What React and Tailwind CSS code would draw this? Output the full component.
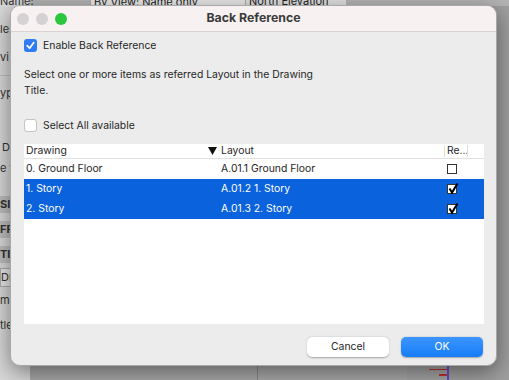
import React from "react";

const rows = [
  { drawing: "0. Ground Floor", layout: "A.01.1 Ground Floor", checked: false, selected: false },
  { drawing: "1. Story", layout: "A.01.2 1. Story", checked: true, selected: true },
  { drawing: "2. Story", layout: "A.01.3 2. Story", checked: true, selected: true },
];

const SmallBox = ({ checked }) => (
  <div className="relative w-[10px] h-[10px] border border-[#333] bg-white">
    {checked && (
      <svg width="11" height="11" viewBox="0 0 11 11" className="absolute -left-[0.5px] -top-[2px] overflow-visible">
        <path d="M1.5 5.5 L4 9.5 L9.5 0.5" stroke="#000" strokeWidth="2" fill="none" />
      </svg>
    )}
  </div>
);

const BlueCheck = () => (
  <div className="w-[13px] h-[13px] rounded-[3px] bg-[#2f7cf6] flex items-center justify-center">
    <svg width="9" height="9" viewBox="0 0 9 9">
      <path d="M1.2 4.6 L3.6 7.2 L7.8 1.6" stroke="#fff" strokeWidth="1.7" fill="none" strokeLinecap="round" strokeLinejoin="round" />
    </svg>
  </div>
);

export default function App() {
  return (
    <div
      className="relative w-[509px] h-[380px] overflow-hidden bg-[#b4b4b4] text-[#222]"
      style={{ fontFamily: "Inter, 'Noto Sans', sans-serif" }}
    >
      {/* background app behind the dialog */}
      <div className="absolute inset-0 flex">
        <div className="w-[30px] bg-[#d8d8d8] text-[11px] text-[#333] leading-none">
          <div className="h-[6px] -mt-[4px]">Name:</div>
          <div className="mt-[22px]">le:</div>
          <div className="mt-[17px]">vi</div>
          <div className="mt-[12px] border-t border-[#bdbdbd]"></div>
          <div className="mt-[12px]">yp</div>
          <div className="mt-[43px] pl-[2px]">D</div>
          <div className="mt-[10px]">e t</div>
          <div className="mt-[22px] bg-[#bdbdbd] py-[3px] font-bold">SI</div>
          <div className="mt-[8px] bg-[#bdbdbd] py-[3px] font-bold">FR</div>
          <div className="mt-[8px] bg-[#bdbdbd] py-[3px] font-bold">TI</div>
          <div className="mt-[5px] bg-[#e6e6e6] py-[3px] border border-[#aaa]">Dra</div>
          <div className="mt-[8px]">m</div>
          <div className="mt-[14px]">tle</div>
        </div>
        <div className="flex-1 flex flex-col">
          <div className="h-[6px] flex text-[11px] leading-none">
            <div className="w-[60px]"></div>
            <div className="w-[156px] bg-[#e8e8e8] -mt-[4px] pl-[3px] border border-[#aaa]">By View: Name only</div>
            <div className="-mt-[4px] pl-[3px] bg-[#e0e0e0] w-[100px]">North Elevation</div>
          </div>
          <div className="flex-1 flex">
            <div className="w-[227px] bg-[#a9a9a9]"></div>
            <div className="w-[1px] bg-[#888]"></div>
            <div className="flex-1 bg-[#a9a9a9]"></div>
            <div className="w-[40px] bg-[#a4a4a4] flex flex-col justify-end pb-[4px] gap-[4px] items-end">
              <div className="w-[18px] h-[1px] bg-[#c03030]"></div>
              <div className="w-[8px] h-[2px] bg-[#c03030]"></div>
            </div>
            <div className="w-[2px] bg-[#6a4bd0]"></div>
            <div className="w-[60px] bg-[#9f9f9f]"></div>
          </div>
        </div>
      </div>

      {/* dialog window */}
      <div className="absolute left-[10px] top-[5px] w-[487px] h-[361px] rounded-[10px] bg-[#ececec] shadow-[0_6px_22px_rgba(0,0,0,0.45)] border border-[#a8a8a8] overflow-hidden flex flex-col">
        <div className="h-[26px] bg-[#f7f2f1] border-b border-[#d8d4d3] flex items-center px-[6px] relative shrink-0">
          <div className="flex gap-[7px]">
            <div className="w-[12px] h-[12px] rounded-full bg-[#d4d2d2]"></div>
            <div className="w-[12px] h-[12px] rounded-full bg-[#d4d2d2]"></div>
            <div className="w-[12px] h-[12px] rounded-full bg-[#2ac73f]"></div>
          </div>
          <div className="absolute inset-0 flex items-center justify-center text-[12.3px] font-bold text-[#3a3a3a]">
            Back Reference
          </div>
        </div>

        <div className="flex-1 flex flex-col px-[13px] text-[10.4px] text-[#262626]">
          <label className="flex items-center gap-[6px] mt-[7px] h-[13px]">
            <BlueCheck />
            <span>Enable Back Reference</span>
          </label>
          <p className="mt-[15px] w-[310px] leading-[16px]">
            Select one or more items as referred Layout in the Drawing Title.
          </p>
          <label className="flex items-center gap-[6px] mt-[20px] h-[13px]">
            <div className="w-[13px] h-[13px] rounded-[3px] bg-white border border-[#c4c4c4]"></div>
            <span>Select All available</span>
          </label>

          <div className="mt-[12px] w-[460px] h-[180px] bg-white flex flex-col">
            <div className="h-[15px] flex items-center border-b border-[#e0e0e0]">
              <div className="w-[184px] pl-[2px]">Drawing</div>
              <div className="w-[236px] flex items-center">
                <svg width="9" height="8" viewBox="0 0 9 8" className="mr-[4px]">
                  <path d="M0 0 H9 L4.5 8 Z" fill="#111" />
                </svg>
                Layout
              </div>
              <div className="w-[1px] h-[12px] bg-[#ddd]"></div>
              <div className="w-[22px] pl-[2px]">Re...</div>
              <div className="w-[1px] h-[12px] bg-[#ddd]"></div>
            </div>
            {rows.map((r) => (
              <div
                key={r.drawing}
                className={`h-[20px] flex items-center ${r.selected ? "bg-[#0a62dc] text-white" : ""}`}
              >
                <div className="w-[197px] pl-[2px]">{r.drawing}</div>
                <div className="w-[226px]">{r.layout}</div>
                <SmallBox checked={r.checked} />
              </div>
            ))}
          </div>

          <div className="flex justify-end gap-[12px] mt-[13px]">
            <button className="w-[82px] h-[20px] rounded-[5px] bg-white text-[#262626] text-[10.4px] shadow-[0_0.5px_1.5px_rgba(0,0,0,0.3)]">
              Cancel
            </button>
            <button className="w-[82px] h-[20px] rounded-[5px] bg-[linear-gradient(#3c95ff,#167df6)] text-white text-[10.4px] shadow-[0_0.5px_1.5px_rgba(0,0,0,0.3)]">
              OK
            </button>
          </div>
        </div>
      </div>
    </div>
  );
}
